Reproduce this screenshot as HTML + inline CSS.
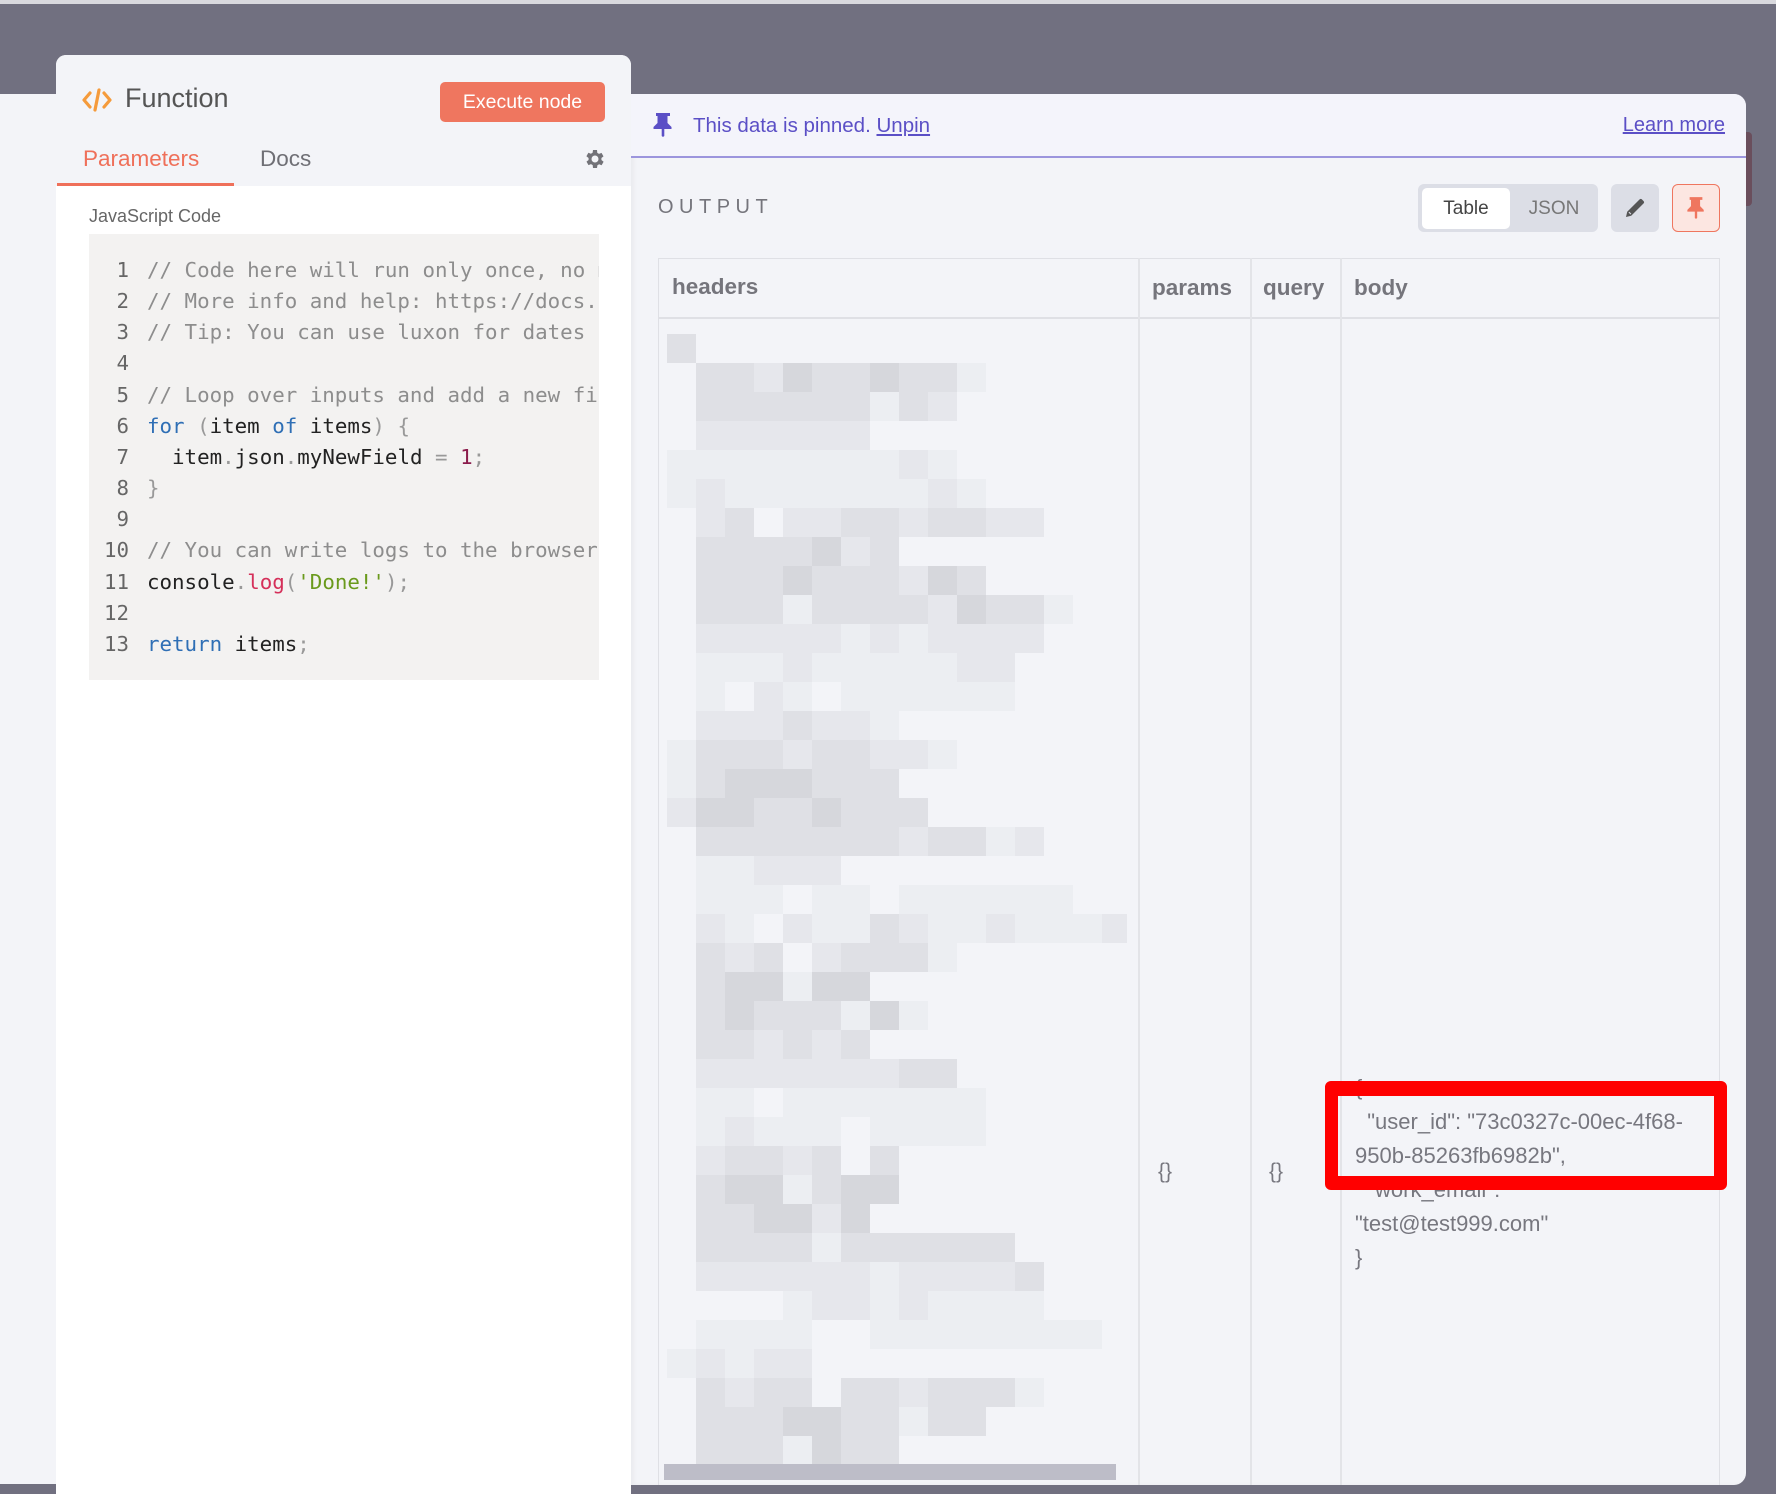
<!DOCTYPE html>
<html><head><meta charset="utf-8"><style>
*{box-sizing:border-box;margin:0;padding:0}
html,body{width:1776px;height:1494px;overflow:hidden}
body{background:#717080;position:relative;font-family:"Liberation Sans",sans-serif}
.a{position:absolute}
.code{font-family:"DejaVu Sans Mono",monospace;font-size:20.8px;white-space:pre;line-height:31.15px}
.c{color:#8d8d8d}.k{color:#2f6fb5}.r{color:#d5305a}.g{color:#6a9a1c}.n{color:#8b1c4c}.p{color:#999}
.hd{font-weight:bold;font-size:22.5px;color:#75757c;top:275px}
.bt{font-size:22px;color:#77777f;left:1355px;white-space:nowrap}
</style></head><body>
<div class="a" style="left:0;top:0;width:1776px;height:4px;background:#d9d9de"></div>
<div class="a" style="left:0;top:94px;width:60px;height:1390px;background:#f3f4f8"></div>
<div class="a" style="left:1740px;top:132px;width:12px;height:74px;background:#6a4e5c;border-radius:4px"></div>

<div class="a" style="left:56px;top:55px;width:575px;height:1439px;background:#fff;border-radius:10px 10px 0 0;overflow:hidden">
  <div class="a" style="left:0;top:0;width:575px;height:131px;background:#f3f4f8"></div>
  <svg class="a" style="left:26px;top:33px" width="30" height="24" viewBox="0 0 30 24"><path d="M8 5 L2 12 L8 19 M22 5 L28 12 L22 19" stroke="#f59b3c" stroke-width="3.2" fill="none" stroke-linecap="round" stroke-linejoin="round"/><path d="M17 2 L13 22" stroke="#f59b3c" stroke-width="3.2" stroke-linecap="round"/></svg>
  <div class="a" style="left:69px;top:28px;font-size:27px;color:#555">Function</div>
  <div class="a" style="left:384px;top:27px;width:165px;height:40px;background:#ef765f;border-radius:5px;color:#fff;font-size:19.5px;text-align:center;line-height:40px">Execute node</div>
  <div class="a" style="left:27px;top:91px;font-size:22.5px;color:#ef705a">Parameters</div>
  <div class="a" style="left:204px;top:91px;font-size:22.5px;color:#6f6f75">Docs</div>
  <div class="a" style="left:1px;top:128px;width:177px;height:3px;background:#ef705a"></div>
  <svg class="a" style="left:526px;top:92px" width="24" height="24" viewBox="0 0 24 24"><path fill="#727278" d="M19.4 13a7.5 7.5 0 0 0 0-2l2.1-1.6-2-3.5-2.5 1a7.4 7.4 0 0 0-1.7-1L15 3h-4l-.4 2.7a7.4 7.4 0 0 0-1.7 1l-2.5-1-2 3.5L6.6 11a7.5 7.5 0 0 0 0 2l-2.1 1.6 2 3.5 2.5-1a7.4 7.4 0 0 0 1.7 1L11 21h4l.4-2.7a7.4 7.4 0 0 0 1.7-1l2.5 1 2-3.5zM13 15.5a3.5 3.5 0 1 1 0-7 3.5 3.5 0 0 1 0 7z"/></svg>
  <div class="a" style="left:33px;top:151px;font-size:18px;color:#666">JavaScript Code</div>
  <div class="a" style="left:33px;top:179px;width:510px;height:446px;background:#f3f2f1;overflow:hidden">
    <div class="a code" style="left:0;top:21px;width:40px;text-align:right;color:#666">1
2
3
4
5
6
7
8
9
10
11
12
13</div>
    <div class="a code" style="left:58px;top:21px;color:#222"><span class="c">// Code here will run only once, no matter</span>
<span class="c">// More info and help: https://docs.n8n.io</span>
<span class="c">// Tip: You can use luxon for dates and</span>

<span class="c">// Loop over inputs and add a new field</span>
<span class="k">for</span> <span class="p">(</span>item <span class="k">of</span> items<span class="p">)</span> <span class="p">{</span>
  item<span class="p">.</span>json<span class="p">.</span>myNewField <span class="p">=</span> <span class="n">1</span><span class="p">;</span>
<span class="p">}</span>

<span class="c">// You can write logs to the browser console</span>
console<span class="p">.</span><span class="r">log</span><span class="p">(</span><span class="g">'Done!'</span><span class="p">);</span>

<span class="k">return</span> items<span class="p">;</span></div>
  </div>
</div>

<div class="a" style="left:631px;top:94px;width:1115px;height:1391px;background:#f3f4f8;border-radius:0 12px 12px 0;overflow:hidden;box-shadow:inset 3px 0 4px rgba(0,0,0,0.04)">
  <div class="a" style="left:0;top:0;width:1115px;height:64px;background:#f4f4fb;border-bottom:2px solid #9c95dd"></div>
  <svg class="a" style="left:21px;top:19px" width="22" height="24" viewBox="0 0 22 24"><path fill="#5b4fc6" d="M4 0h14v3h-2.5v7l4 4v2H12.3v7l-1.3 1-1.3-1v-7H1.5v-2l4-4V3H4z"/></svg>
  <div class="a" style="left:62px;top:20px;font-size:20.5px;color:#5b4fc6">This data is pinned. <span style="text-decoration:underline">Unpin</span></div>
  <div class="a" style="right:21px;top:20px;font-size:20px;color:#5b4fc6;text-decoration:underline">Learn more</div>
  <div class="a" style="left:27px;top:102px;font-size:20px;color:#75757c;letter-spacing:5.5px">OUTPUT</div>
  <div class="a" style="left:787px;top:90px;width:180px;height:48px;background:#dcdee6;border-radius:6px"></div>
  <div class="a" style="left:791px;top:94px;width:88px;height:41px;background:#fff;border-radius:5px;font-size:19px;color:#444;text-align:center;line-height:41px">Table</div>
  <div class="a" style="left:882px;top:94px;width:82px;height:41px;font-size:19px;color:#777;text-align:center;line-height:41px">JSON</div>
  <div class="a" style="left:980px;top:90px;width:48px;height:48px;background:#dcdee6;border-radius:6px"></div>
  <svg class="a" style="left:992px;top:102px" width="24" height="24" viewBox="0 0 24 24"><path fill="#555" d="M3 21l1.2-5.2L16.5 3.5a1.8 1.8 0 0 1 2.5 0l1.5 1.5a1.8 1.8 0 0 1 0 2.5L8.2 19.8zM5.5 16.5l2 2 .8-.8-2-2z"/></svg>
  <div class="a" style="left:1041px;top:90px;width:48px;height:48px;background:#fce6e1;border:1.5px solid #ef765f;border-radius:6px"></div>
  <svg class="a" style="left:1055px;top:102px" width="20" height="24" viewBox="0 0 22 24"><path fill="#ef765f" d="M4 0h14v3h-2.5v7l4 4v2H12.3v7l-1.3 1-1.3-1v-7H1.5v-2l4-4V3H4z"/></svg>
  <div class="a" style="left:27px;top:164px;width:1062px;height:1300px;border:1.5px solid #dfe0e5;border-bottom:none"></div>
  <div class="a" style="left:27px;top:223px;width:1062px;height:1.5px;background:#dfe0e5"></div>
  <div class="a" style="left:507px;top:164px;width:1.5px;height:1300px;background:#e3e4e8"></div>
  <div class="a" style="left:619px;top:164px;width:1.5px;height:1300px;background:#e3e4e8"></div>
  <div class="a" style="left:709px;top:164px;width:1.5px;height:1300px;background:#e3e4e8"></div>
  <div class="a hd" style="left:41px;top:180px">headers</div>
  <svg id="px" class="a" style="left:36px;top:240px" width="460" height="1130"></svg>
  <div class="a" style="left:33px;top:1370px;width:452px;height:16px;background:#bdbdc8"></div>
</div>
<div class="a hd" style="left:1152px">params</div>
<div class="a hd" style="left:1263px">query</div>
<div class="a hd" style="left:1354px">body</div>
<div class="a" style="left:1158px;top:1160px;font-size:21px;color:#77777f">{}</div>
<div class="a" style="left:1269px;top:1160px;font-size:21px;color:#77777f">{}</div>
<div class="a bt" style="top:1075px">{</div>
<div class="a bt" style="top:1109px">&nbsp;&nbsp;"user_id": "73c0327c-00ec-4f68-</div>
<div class="a bt" style="top:1143px">950b-85263fb6982b",</div>
<div class="a bt" style="top:1177px">&nbsp;&nbsp;"work_email":</div>
<div class="a bt" style="top:1211px">"test@test999.com"</div>
<div class="a bt" style="top:1245px">}</div>
<div class="a" style="left:1325px;top:1081px;width:402px;height:109px;border:14px solid #ff0000;border-width:15px 13px 14px 13px;border-radius:6px"></div>
<script>
var rows=["3","03324334331","0333333132","0222222","1111111121","12111111121","0230223323322","03333423","03334333243","03331333324331","0222221212222","011121111122","010210111111","02223221","1333233221","13444333","244334333","0333333323312","011222","01110110111111",
"0210211321121112","0323023331","0344144","034333141","03323230","0222222233","01101111111","01211101111","02332303","03441344","0334424","033331333333","0222222122223","0000122121111","011110011111111","12122","0323303323331","03334433133","03331433"];
var col={"1":"#eceef2","2":"#e6e7ec","3":"#dfe0e5","4":"#d6d7dc"};
var s="";for(var r=0;r<rows.length;r++){for(var c=0;c<rows[r].length;c++){var v=rows[r][c];if(v!="0")s+='<rect x="'+(c*29)+'" y="'+(r*29)+'" width="29" height="29" fill="'+col[v]+'"/>';}}
document.getElementById("px").innerHTML=s;
</script>
</body></html>
